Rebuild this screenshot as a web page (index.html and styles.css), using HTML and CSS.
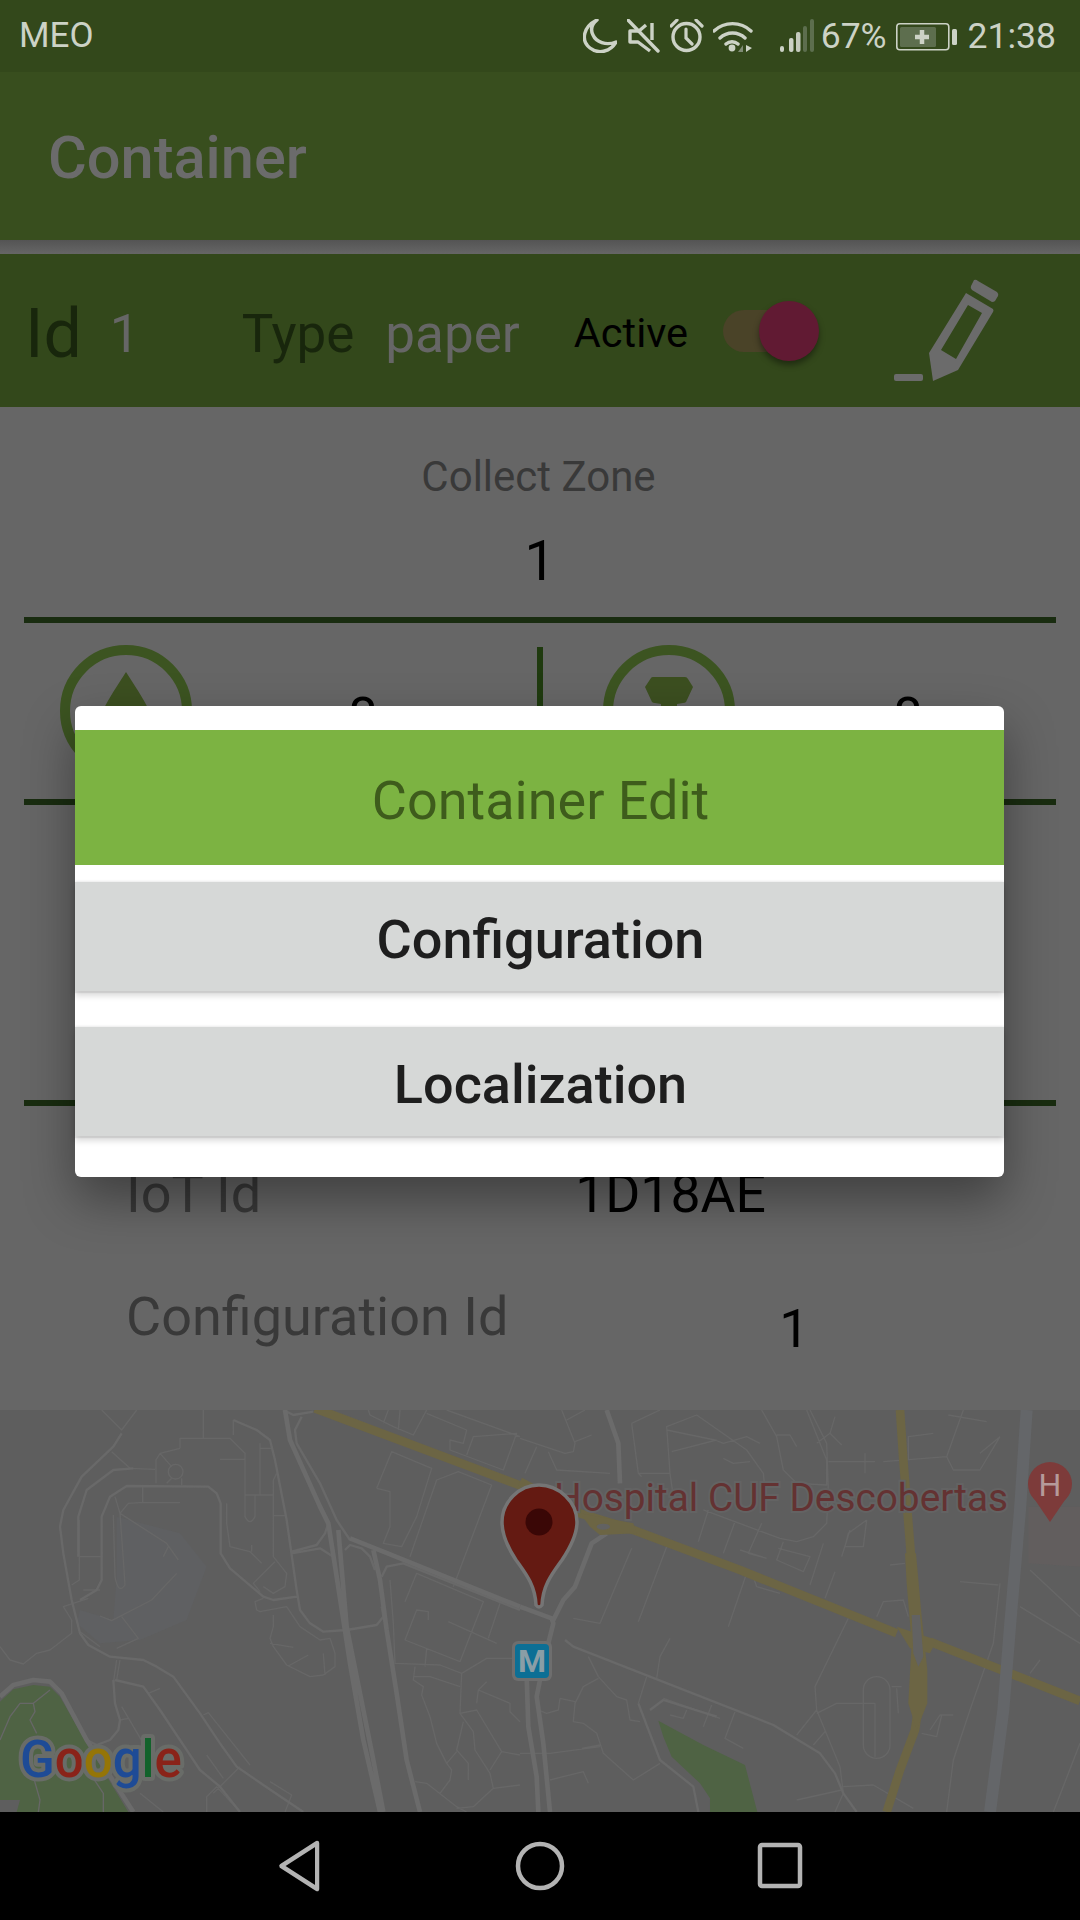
FILE: index.html
```html
<!DOCTYPE html>
<html lang="en">
<head>
<meta charset="utf-8">
<title>Container</title>
<link rel="stylesheet" href="styles.css">
</head>
<body>
<div class="page">
  <header class="status">
    <span class="carrier">MEO</span>
    <div class="status-right">
      <svg class="si si-moon" viewBox="583 20 34 34"><path d="M597 21 C584 27 580 41 590 49 C599 56 611 52 616 43 C606 47 596 43 593 36 C590 30 592 25 597 21 Z" fill="none" stroke="#ccd2c6" stroke-width="3.4" stroke-linejoin="round"/></svg>
      <svg class="si si-mute" viewBox="627 20 33 34"><path d="M628 21 L658 52" stroke="#ccd2c6" stroke-width="3.4" stroke-linecap="round"/><path d="M652 24 L652 41 M646 26 L639 32 L630 32 L630 43 L638 43 L650 52" fill="none" stroke="#ccd2c6" stroke-width="3.4" stroke-linejoin="round"/></svg>
      <svg class="si si-alarm" viewBox="670 20 34 34"><circle cx="686.500" cy="38" r="13.500" fill="none" stroke="#ccd2c6" stroke-width="3.400"/><path d="M686 30 L686 39 L692 45 M671 27 L677 21 M702 27 L696 21" fill="none" stroke="#ccd2c6" stroke-width="3.200" stroke-linecap="round"/></svg>
      <svg class="si si-wifi" viewBox="713 19 41 35"><path d="M714 31 A27 27 0 0 1 751 31 M720 38 A18 18 0 0 1 745 38 M726 44 A9 9 0 0 1 738 44" fill="none" stroke="#ccd2c6" stroke-width="3.400" stroke-linecap="round"/><circle cx="732" cy="48" r="3.400" fill="#ccd2c6"/><path d="M743 45 L743 52 L738 52 Z" fill="#7f8b74"/><path d="M746 45 L746 52 L752 48 Z" fill="#ccd2c6"/></svg>
      <svg class="si si-signal" viewBox="779 19 36 35"><g fill="#ccd2c6"><rect x="780" y="46" width="4" height="6" rx="2"/><rect x="789" y="38" width="4.500" height="14" rx="2"/></g><g fill="#ccd2c6" opacity=".95"><rect x="796" y="32" width="4.500" height="20" rx="2"/></g><g fill="#5d6e4e"><rect x="803" y="26" width="4" height="26" rx="2"/><rect x="810" y="19" width="4" height="33" rx="2"/></g></svg>
      <span class="percent">67%</span>
      <svg class="si si-batt" viewBox="896 21 62 29"><rect x="896.800" y="22.800" width="52" height="26" rx="3" fill="none" stroke="#ccd2c6" stroke-width="1.600"/><rect x="900" y="26" width="36" height="20" rx="1.500" fill="#5d6e4e"/><path d="M922 29 L922 43 M915 36 L929 36" stroke="#ccd2c6" stroke-width="4.500"/><rect x="952" y="28" width="5" height="16" rx="1.500" fill="#ccd2c6"/></svg>
      <span class="clock">21:38</span>
    </div>
  </header>

  <div class="appbar"><h1 class="appbar-title">Container</h1></div>

  <main class="content">
    <section class="idbar">
      <span class="id-label">Id</span>
      <span class="id-value">1</span>
      <span class="type-label">Type</span>
      <span class="type-value">paper</span>
      <span class="active-label">Active</span>
      <span class="toggle"><span class="toggle-thumb"></span></span>
      <svg class="pencil" viewBox="893 278 106 105">
        <rect x="893" y="374" width="29" height="7" rx="2"/>
        <path d="M973 280 Q975 279 977 281 L996 292 Q998 294 997 296 L994 301 Q993 302 991 302 L971 290 Q969 288 970 286 Z"/>
        <path fill-rule="evenodd" d="M965 293 L992 309 Q993 311 992 312 L957 370 L932 381 L928 353 Z M967 305 L940 350 L955 359 L981 313 Z"/>
      </svg>
    </section>

    <section class="zone">
      <div class="zone-label">Collect Zone</div>
      <div class="zone-value">1</div>
    </section>
    <hr class="rule">
    <section class="stats">
      <div class="stat">
        <span class="ring"><svg viewBox="0 0 50 50" class="ring-icon ring-icon-up"><path d="M25 0 C34 14 42 26 48 38 L48 70 L2 70 L2 38 C8 26 16 14 25 0 Z"/></svg></span>
        <span class="stat-value">8</span>
      </div>
      <div class="stat stat-right">
        <span class="ring"><svg viewBox="0 0 50 50" class="ring-icon ring-icon-cup"><path d="M7 1 Q7.500 0 9 0 L41 0 Q43 0 44 2 L49 10 L42 25 Q41 26 39 26 L33 27 L33 50 L17 50 L17 27 L11 26 Q9 26 8 25 L1 10 Z"/></svg></span>
        <span class="stat-value">8</span>
      </div>
    </section>
    <hr class="rule">
    <section class="middle"></section>
    <hr class="rule">
    <section class="ids">
      <div class="id-row id-row-iot"><span class="id-key">IoT Id</span><span class="id-val">1D18AE</span></div>
      <div class="id-row id-row-conf"><span class="id-key">Configuration Id</span><span class="id-val id-val-conf">1</span></div>
    </section>

    <section class="map">
      <svg class="map-svg" viewBox="0 0 1080 402">
        <rect width="1080" height="402" fill="#5e5e5e"/>
        <g transform="scale(.33333)">
          <path d="M350 320 L540 370 L620 470 L560 630 L420 690 L300 700 L230 640 L240 600 L340 630 L350 500 Z" fill="#5f6062"/>
          <path class="park" d="M0 875 L40 838 L100 825 L150 830 L180 860 L260 1000 L385 1206 L50 1206 L60 1170 L0 1170 Z"/>
          <path class="t" d="M305 0 L365 60 L410 0 M610 0 L610 85 M540 115 L540 85 L690 85 L735 130 L735 320 Q750 350 765 320 L765 255 M700 75 L700 30 M480 130 L540 115 M480 130 L468 150 L468 220 M480 130 L515 170 M500 220 L515 205 M545 205 L545 225 M660 148 L735 148 M780 100 L780 255 L820 255 M780 115 L815 115 M735 255 L820 255 M830 190 L820 210 L820 440 L860 490 L855 530 L820 550 L790 530 M820 317 L855 317 M335 125 L390 175 L465 178 M345 260 L360 310 L385 280 L420 278 L540 278 M428 228 L428 278 M340 315 L345 500 Q355 555 375 525 L370 450 L360 310 M360 310 L500 400 L535 450 M490 440 L505 410 M530 490 L455 570 L335 632 L300 618 M365 620 L415 685 L350 715 M240 665 L300 710 M238 330 L238 510 L215 525 M238 440 L305 440 M300 540 L250 540 M680 280 L680 340 L690 410 L750 425 L785 460 M755 405 L755 425 M825 455 L760 520 L780 545 M790 565 L765 575 L770 600 L780 605 L860 590 L880 620 L900 650 L960 690 L990 685 L1005 730 L1005 770 L970 795 L930 800 L860 765 L820 710 L810 685 L820 650 L820 615 M810 700 L880 712 M865 768 L925 735 M970 730 L975 795 M0 710 L30 750 L70 762 L110 730 L150 720 L215 670 L215 630 L190 590 L265 565 M350 750 L340 820 M360 750 L350 810 M445 850 L480 835 M365 890 L430 1000 M360 930 L385 925 M610 915 L625 908 L750 1065 M620 1035 L670 1105 M640 1150 L720 1070 M620 1206 L620 1160 L650 1130 L720 1206 M810 1115 L875 1155 L855 1206 M420 1150 L490 1206 M1130 235 L1170 245 L1170 350 L1150 400 L1205 410 L1250 320 L1295 175 L1175 125 L1130 235 M1230 440 L1310 210 L1375 185 L1475 225 L1360 530 M1215 575 L1250 490 L1450 575 L1380 755 L1215 690 L1250 600 L1285 605 L1285 630 M1170 510 L1180 640 L1185 760 L1320 765 L1385 790 L1460 745 L1550 745 M1345 635 L1490 700 M1500 580 L1465 685 M1280 715 L1275 770 M1245 770 L1240 810 L1270 830 L1265 855 L1290 920 L1310 1000 L1340 1060 L1355 1080 L1350 1110 L1320 1150 M1385 790 L1380 910 L1420 965 L1425 1020 L1470 1090 L1480 1135 L1560 1125 M1380 910 L1430 900 L1505 1025 L1470 1080 M1505 1025 L1560 1035 M1390 935 L1370 1020 L1405 1060 L1405 1110 M1340 1060 L1370 1025 M1245 1115 L1280 1120 L1370 1190 L1400 1206 M1480 1135 L1420 1190 L1370 1195 M1240 800 L1290 800 L1380 830 M1430 880 L1435 840 L1530 880 L1530 905 L1560 935 M1435 840 L1460 815 M1105 0 L1110 15 L1180 50 L1240 75 L1280 0 M1200 0 L1195 60 M1150 40 L1165 0 M1280 10 L1400 60 L1390 100 L1350 90 L1350 120 L1510 180 L1550 70 L1420 80 L1400 135 M1340 0 L1560 80 M100 880 L60 880 L30 920 L0 990 M150 840 L100 880 L105 905 L90 930 L110 970 M100 1100 L120 1170 L115 1206 M270 1090 L310 1150 L310 1206"/>
          <circle class="t" cx="527" cy="185" r="22"/>
          <path class="m" d="M365 70 L340 110 L245 200 L190 300 L180 350 L190 430 L215 570 L240 670 L265 705 L330 740 L430 750 L470 770 L520 800 L600 910 L660 1000 L710 1070 L790 1125 L910 1206 M400 175 L340 180 L260 240 L235 320 L235 440 M240 570 L290 540 L305 510 L305 320 L330 260 L380 228 L625 230 L650 250 L662 280 L662 430 L690 475 L790 560 L820 570 L890 560 M700 30 L770 60 L810 90 L825 150 L860 330 L890 540 L900 600 L930 640 L970 665 L1040 660 L1130 645 L1150 620 L1145 590 M875 425 L950 405 L975 370 L985 340 M875 430 L960 415 L1000 440 M340 810 L345 880 L360 930 L355 960 L330 990 L290 1005 L260 990 M345 810 L430 830 L480 900 L600 1080 L660 1130 L720 1206 M850 0 L880 15 L940 5 M905 20 L885 60 L890 100 L960 220 L1010 330 L1050 390 M1035 420 L1050 405 L1085 415 L1110 440 L1125 480 M1145 500 L1160 470 L1210 460 L1560 600"/>
          <path class="r" d="M855 0 L870 90 L960 290 L985 340 L1010 500 L1050 760 L1090 990 L1140 1206 M1015 360 L1040 650 L1080 850 L1120 1050 L1150 1206 M1050 385 L1150 425 L1560 590 M1120 420 L1140 510 L1160 660 L1190 850 L1220 1050 L1260 1206 M0 860 L40 825 L100 810 L150 815 L185 850 L260 990 L400 1206"/>
          <path class="hw" d="M945 -5 L1565 228"/>
        </g>
        <g transform="translate(520) scale(.33333)">
          <path d="M1525 290 L1680 290 L1680 470 L1525 460 Z" fill="#625e5e"/>
          <path class="park" d="M415 932 L550 1005 L675 1065 L712 1206 L570 1206 L570 1165 L540 1120 L455 1040 L430 980 Z"/>
          <path class="t" d="M0 85 L135 130 L160 125 L165 100 L125 0 M165 95 L215 75 M140 30 L195 0 M50 110 L15 190 M85 125 L110 180 L270 190 M335 40 L420 0 M335 40 L355 190 L450 190 L440 50 L530 15 L680 120 L730 190 L735 240 M440 60 L585 90 L610 100 L680 80 L720 100 M455 125 L590 90 M355 190 L365 200 M450 190 L460 260 M610 145 L640 160 L690 155 M725 0 L770 80 L790 180 L830 220 L920 225 L920 150 L860 0 M770 75 L810 75 L830 110 M870 0 L920 100 L925 240 L920 340 L880 380 L830 395 L780 385 L550 300 M945 20 L930 70 L890 100 M930 70 L965 105 M925 155 L1065 155 M1035 130 L1035 190 M1090 155 L1280 140 L1330 0 M1280 140 L1300 180 L1380 180 L1440 80 M1165 150 L1165 80 L1240 70 M1380 130 L1440 80 M1285 15 L1400 35 M565 300 L535 395 M645 335 L610 430 M725 340 L685 430 L740 445 M660 420 L740 445 M790 395 L770 450 L850 485 L870 440 L775 415 M910 400 L870 525 M945 485 L915 565 M990 360 L965 440 M1040 330 L985 370 L975 410 L1030 410 L1040 330 M335 415 L240 640 L160 625 M440 410 L355 635 M680 490 L625 650 M700 500 L710 530 L780 550 M450 685 L420 740 L410 805 M205 740 L235 800 L290 860 L320 870 L330 930 L360 935 M380 800 L355 880 M235 805 L190 830 L165 880 L160 935 L190 940 L230 970 L250 1030 L340 1110 L420 1060 M120 865 L165 875 M120 865 L115 900 L80 910 L55 900 M185 1015 L240 1005 M240 1010 L90 1030 L0 1030 M90 1110 L190 1085 L205 1120 M430 865 L600 925 M575 885 L550 950 M645 905 L615 985 L670 1015 M500 900 L490 925 L450 915 M1070 620 L1090 575 L1150 570 L1165 620 M985 625 L885 830 L890 900 L960 1070 L970 1150 M890 900 L830 975 M915 965 L880 1005 M890 910 L950 880 L1065 880 M1065 880 L1065 1040 M1115 830 L1145 830 M1130 835 L1135 910 M1230 960 L1260 915 L1300 915 M1205 970 L1250 980 L1265 915 M1110 465 L1155 460 M1320 515 L1435 525 M1440 520 L1420 700 L1350 900 L1300 1050 L1280 1206 M1500 590 L1680 700 M1530 480 L1680 620 M1530 790 L1560 750 M1480 800 L1530 800 M830 1170 L965 1140 M970 1130 L1060 1125 L1180 1195 M970 1150 L945 1206 M1600 1206 L1680 1000"/>
          <rect class="t" x="1030" y="800" width="80" height="245" rx="40"/>
          <path class="m" d="M135 690 L160 710 L760 945 L900 1030 L945 1090 L970 1150 L1010 1206 M355 880 L420 1050 L520 1130 L535 1206 M390 900 L430 870 L590 920"/>
          <path class="r" d="M260 0 L295 100 L300 220 M100 630 L130 570 L165 530 L215 400 L260 370 M0 590 L95 625 L100 640 L70 760 L50 860 L70 1000 L90 1206 M20 800 L25 950 L50 1100 L55 1206"/>
          <path class="hw" d="M0 215 L180 310 L340 360 L660 480 L1130 670 M1230 695 L1680 873"/>
          <path class="hw" d="M1140 0 L1150 150 L1170 400 L1185 600 L1200 780 L1200 860 L1185 960 L1140 1080 L1100 1206"/>
          <path d="M1155 430 L1188 430 L1205 620 L1222 780 L1222 880 L1190 960 L1165 880 L1175 700 L1160 520 Z" fill="#6c6544"/>
          <path d="M1130 650 L1250 690 L1230 730 L1170 715 Z" fill="#6c6544"/>
          <path d="M1175 615 L1200 615 L1210 740 L1195 770 L1180 730 Z" fill="#626262"/>
          <path d="M180 310 L340 340 L350 370 L240 375 L210 350 Z" fill="#6c6544"/>
          <ellipse cx="250" cy="350" rx="20" ry="9" fill="#626262"/>
          <path class="rail" d="M1520 0 L1500 300 L1470 650 L1450 900 L1410 1206"/>
        </g>

        <circle class="poi" cx="1050" cy="74" r="22"/>
        <path class="poi" d="M1033 87 L1050 112 L1067 87 Z"/>
        <text class="poi-h" x="1050" y="86">H</text>
        <text class="map-label" x="554" y="101">Hospital CUF Descobertas</text>

        <rect x="512" y="231" width="40" height="40" rx="6" fill="#6e6e6e"/>
        <rect x="515" y="234" width="34" height="34" rx="4" fill="#0c6f95"/>
        <text class="metro" x="532" y="262">M</text>

        <path d="M539 75 C559 75 577 92 577 112 C577 125 570 138 562 150 C552 164 543 175 542 195 Q539 199 536 195 C535 175 526 164 516 150 C508 138 502 125 502 112 C502 92 519 75 539 75 Z" fill="#641a12" stroke="#757575" stroke-width="3.500"/>
        <circle cx="539" cy="112" r="13.500" fill="#3a0706"/>

        <text class="google" x="20" y="367"><tspan fill="#1e4b96">G</tspan><tspan fill="#8a2319">o</tspan><tspan fill="#957507">o</tspan><tspan fill="#1e4b96">g</tspan><tspan fill="#12622b">l</tspan><tspan fill="#8a2319">e</tspan></text>
      </svg>
    </section>
  </main>

  <nav class="navbar">
    <svg class="nav-icon" viewBox="0 0 60 60"><path d="M48 7 L10 30 L48 53 Z" transform="translate(2 0) scale(.94 1)" fill="none" stroke="#b3b3b3" stroke-width="4.500" stroke-linejoin="round"/></svg>
    <svg class="nav-icon" viewBox="0 0 60 60"><circle cx="30" cy="30" r="22" fill="none" stroke="#b3b3b3" stroke-width="4.500"/></svg>
    <svg class="nav-icon" viewBox="0 0 60 60"><rect x="10" y="9" width="40" height="41" rx="2" fill="none" stroke="#b3b3b3" stroke-width="4.500"/></svg>
  </nav>

  <div class="dialog">
    <div class="dialog-title">Container Edit</div>
    <button class="dialog-btn dialog-btn-first">Configuration</button>
    <button class="dialog-btn dialog-btn-second">Localization</button>
  </div>
</div>
</body>
</html>
```
FILE: styles.css
```css
* { box-sizing: border-box; }
html, body { margin: 0; padding: 0; }
body { width: 1080px; height: 1920px; overflow: hidden; font-family: Roboto, "Liberation Sans", sans-serif; background: #666; }
.page { position: relative; width: 1080px; height: 1920px; display: flex; flex-direction: column; background: #666; }

.status { height: 72px; flex: none; background: #33481b; display: flex; align-items: center; justify-content: space-between; padding: 0 24px 0 19px; color: #ccd2c6; }
.carrier { font-size: 35px; line-height: 78px; }
.status-right { display: flex; align-items: center; }
.si { display: block; flex: none; height: 34px; }
.si-moon { width: 34px; margin-right: 10px; }
.si-mute { width: 33px; margin-right: 10px; }
.si-alarm { width: 34px; margin-right: 9px; }
.si-wifi { width: 41px; height: 35px; margin-right: 25px; }
.si-signal { width: 36px; height: 35px; margin-right: 6px; }
.si-batt { width: 62px; height: 29px; margin: 0 10px 0 9px; }
.percent { font-size: 35.500px; line-height: 68px; }
.clock { font-size: 35.500px; line-height: 76px; }

.appbar { height: 168px; flex: none; background: #384e1e; display: flex; align-items: center; padding: 4px 0 0 48px; }
.appbar-title { margin: 0; font-size: 59.500px; font-weight: 500; color: #6b6b6b; }

.content { flex: 1; display: flex; flex-direction: column; padding-top: 14px; background: linear-gradient(#545454, #666 14px) no-repeat; background-size: 100% 14px; min-height: 0; }

.idbar { height: 153px; flex: none; background: #33481b; display: flex; align-items: center; padding-left: 25px; }
.id-label, .id-value, .type-label, .type-value { margin-top: 6px; }
.active-label { margin-top: 4px; }
.id-label { font-size: 68px; color: #18260c; }
.id-value { font-size: 53px; color: #666; margin-left: 28px; }
.type-label { font-size: 53px; color: #18260c; margin-left: 102px; }
.type-value { font-size: 53px; color: #666; margin-left: 31px; }
.active-label { font-size: 41.500px; color: #000; margin-left: 54px; }
.toggle { position: relative; width: 76px; height: 42px; margin-left: 35px; border-radius: 21px; background: #4a4328; }
.toggle-thumb { position: absolute; left: 36px; top: -9px; width: 60px; height: 60px; border-radius: 50%; background: #611a33; box-shadow: 0 4px 6px rgba(0,0,0,.4); }
.pencil { width: 106px; height: 105px; margin-left: 95px; fill: #6b6b6b; flex: none; }

.zone { height: 210px; flex: none; display: flex; flex-direction: column; align-items: center; }
.zone-label { font-size: 42px; color: #393939; margin: 46px 3px 0 0; line-height: 48px; }
.zone-value { font-size: 55px; color: #000; margin-top: 28px; line-height: 64px; }

.rule { height: 6px; flex: none; margin: 0 24px; border: 0; background: #192c10; }

.stats { height: 176px; flex: none; display: grid; grid-template-columns: 1fr 1fr; margin: 0 24px; position: relative; }
.stat { display: flex; align-items: flex-start; padding: 22px 0 0 36px; }
.stat-right { padding-left: 63px; position: relative; }
.stat-right::before { content: ""; position: absolute; left: -3px; top: 24px; bottom: 0; width: 6px; background: #1f3a0f; }
.ring { width: 132px; height: 132px; flex: none; border-radius: 50%; border: 10px solid #3c5421; display: flex; align-items: flex-start; justify-content: center; overflow: hidden; }
.ring-icon { width: 50px; height: 50px; fill: #3c4f20; overflow: visible; }
.ring-icon-up { margin-top: 17px; }
.ring-icon-cup { margin-top: 22px; }
.stat-value { font-size: 53px; color: #000; line-height: 60px; margin: 42px 0 0 156px; }
.stat-right .stat-value { margin-left: 158px; }

.middle { height: 295px; flex: none; }

.ids { height: 304px; flex: none; }
.id-row { display: flex; align-items: baseline; padding-left: 126px; }
.id-row-iot { padding-top: 56px; }
.id-row-conf { padding-top: 60px; }
.id-key { font-size: 54px; color: #393939; }
.id-val { font-size: 53.500px; color: #000; margin-left: 314px; }
.id-val-conf { margin-left: 271px; position: relative; top: 12px; }

.map { height: 402px; flex: none; }
.map-svg { display: block; width: 1080px; height: 402px; }
.park { fill: #4f6344; }
.t { fill: none; stroke: #676767; stroke-width: 4px; stroke-linejoin: round; }
.m { fill: none; stroke: #696969; stroke-width: 7px; stroke-linejoin: round; }
.r { fill: none; stroke: #6b6b6b; stroke-width: 14px; stroke-linejoin: round; }
.hw { fill: none; stroke: #6c6544; stroke-width: 26px; stroke-linejoin: round; }
.rail { fill: none; stroke: #646669; stroke-width: 36px; }
.poi { fill: #7d3b3a; }
.poi-h { font-family: Roboto, sans-serif; font-size: 32px; fill: #b59a9a; text-anchor: middle; }
.map-label { font-family: Roboto, sans-serif; font-size: 38.800px; fill: #643232; stroke: #636363; stroke-width: 4px; paint-order: stroke; }
.metro { font-family: Roboto, sans-serif; font-size: 32px; font-weight: 700; fill: #8a9ea6; text-anchor: middle; }
.google { font-family: Roboto, sans-serif; font-size: 51px; font-weight: 500; stroke: #696c68; stroke-width: 8px; paint-order: stroke; stroke-linejoin: round; }

.navbar { height: 108px; flex: none; background: #000; display: grid; grid-template-columns: repeat(3, 240px); justify-items: center; align-items: center; padding: 0 180px; }
.nav-icon { width: 60px; height: 60px; display: block; }

.dialog { position: absolute; left: 75px; top: 706px; width: 929px; height: 471px; background: #fff; border-radius: 6px; padding-top: 24px; box-shadow: 0 22px 50px rgba(0,0,0,.38); display: flex; flex-direction: column; }
.dialog-title { height: 135px; flex: none; background: #7cb342; color: #3e5c1c; font-size: 54px; padding: 5px 0 0 2px; display: flex; align-items: center; justify-content: center; }
.dialog-btn { height: 109px; flex: none; border: 0; padding: 5px 0 0 2px; background: #d6d8d7; color: #1e1e1e; font-family: Roboto, sans-serif; font-size: 54px; font-weight: 500; box-shadow: 0 2px 1px rgba(0,0,0,.08), 0 5px 6px rgba(0,0,0,.14), 0 -1px 2px rgba(0,0,0,.08); }
.dialog-btn-first { margin-top: 17px; }
.dialog-btn-second { margin-top: 36px; }
```
